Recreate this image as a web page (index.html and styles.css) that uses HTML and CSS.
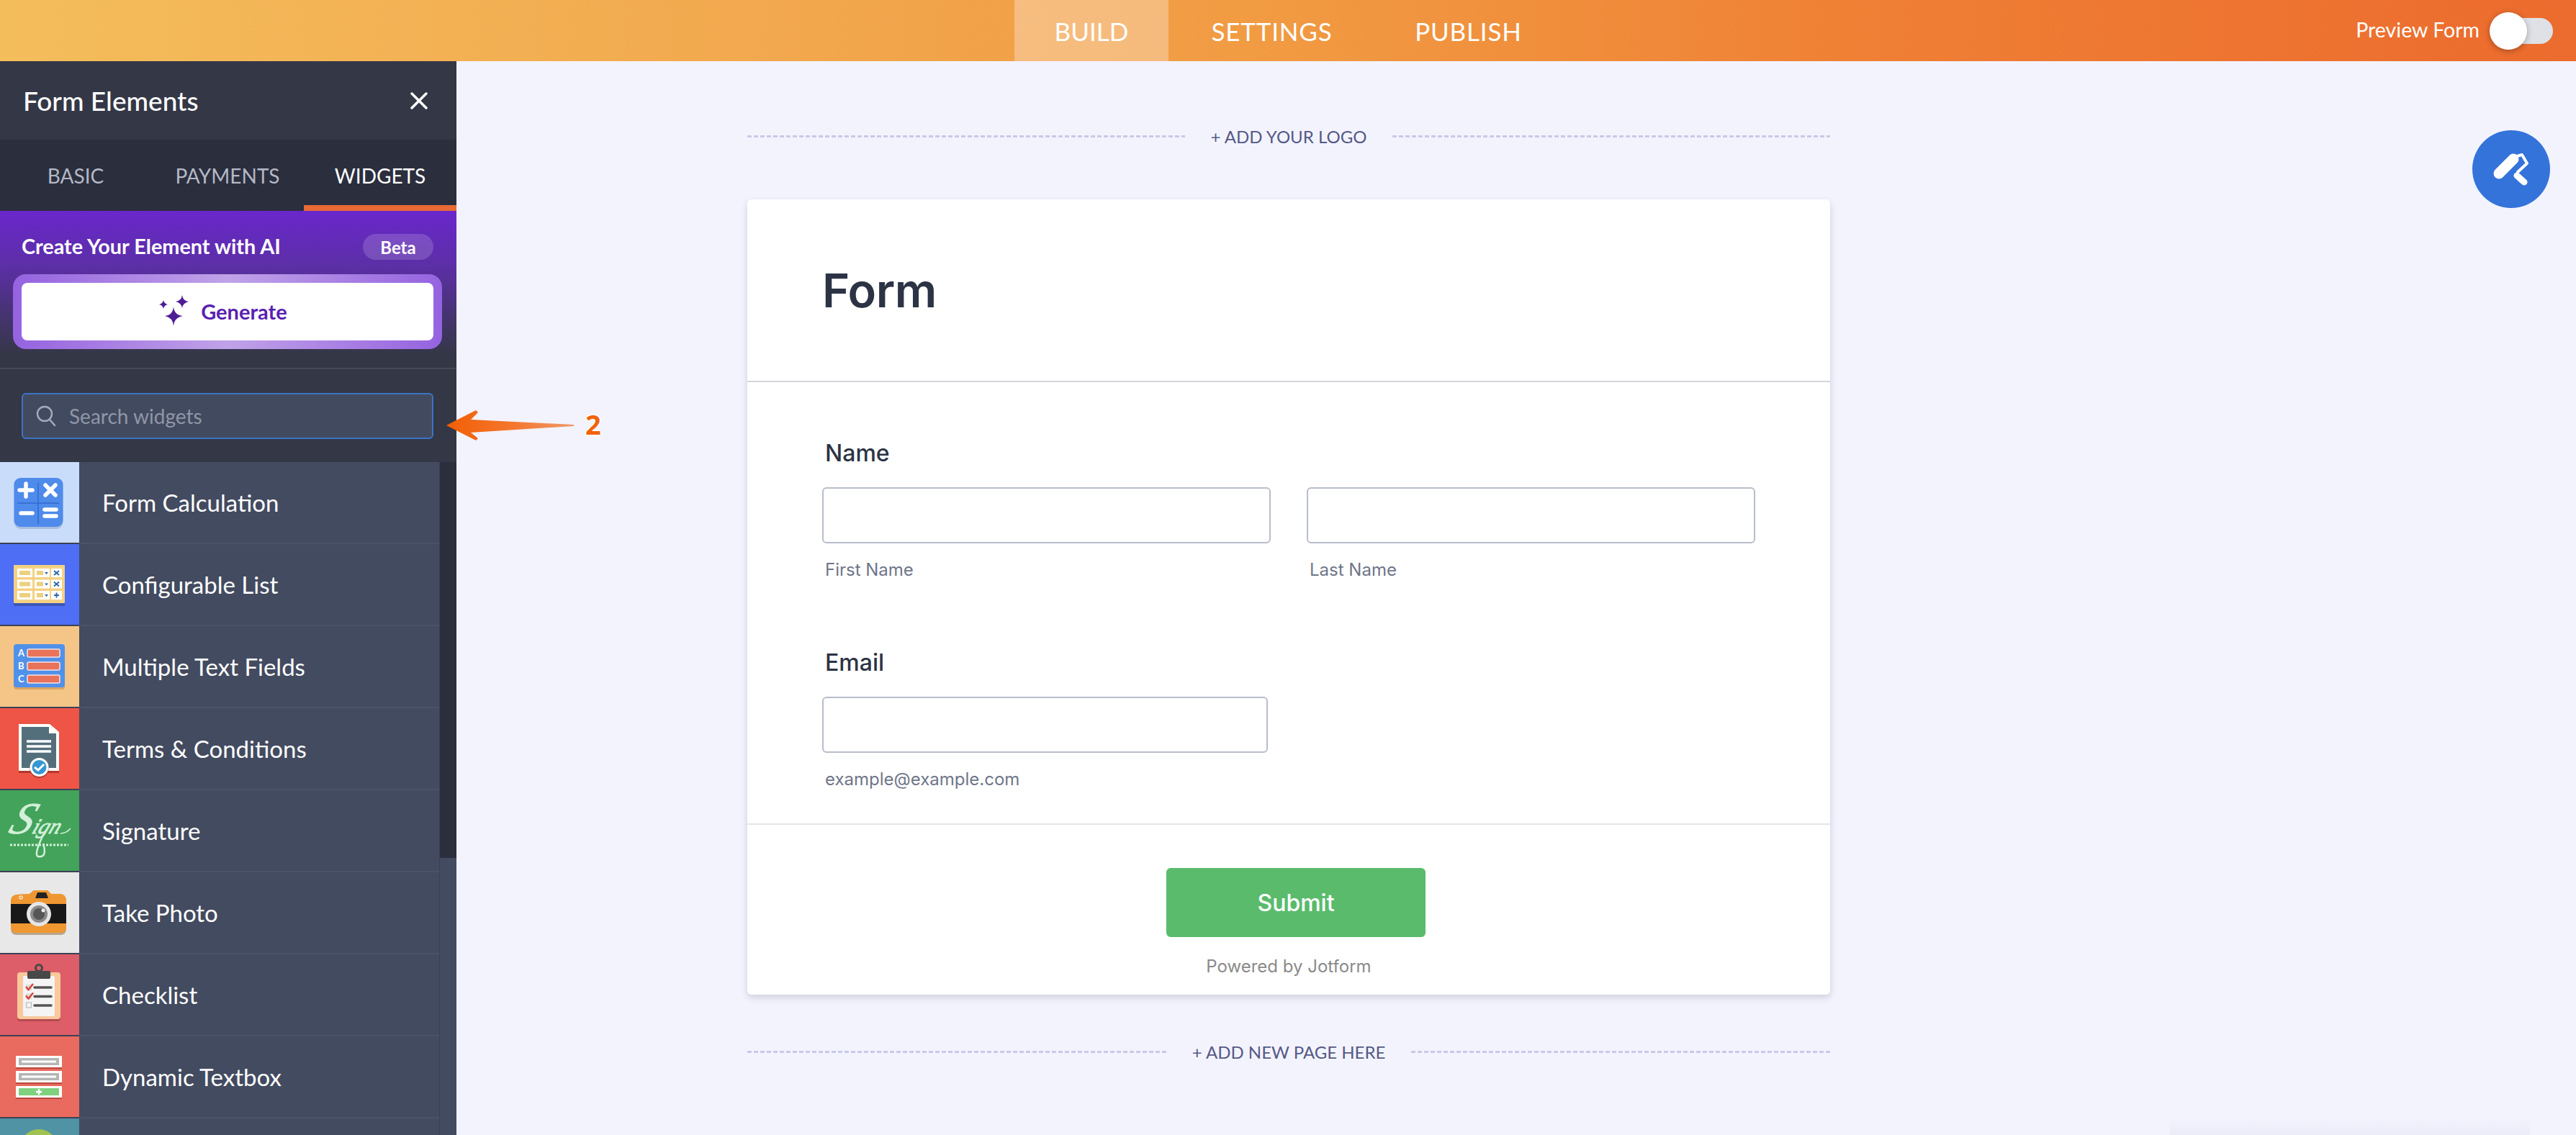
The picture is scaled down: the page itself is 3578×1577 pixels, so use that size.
FILE: index.html
```html
<!DOCTYPE html>
<html lang="en">
<head>
<meta charset="utf-8">
<title>Form Builder</title>
<link rel="stylesheet" href="styles.css">
</head>
<body>
<header class="topbar">
  <div></div>
  <nav class="nav">
    <a class="nav-item active">BUILD</a>
    <a class="nav-item">SETTINGS</a>
    <a class="nav-item">PUBLISH</a>
  </nav>
  <div class="preview">
    <span>Preview Form</span>
    <span class="toggle"><span class="knob"></span></span>
  </div>
</header>
<main class="main">
  <aside class="sidebar">
    <div class="side-head">
      <span>Form Elements</span>
      <svg class="close" width="24" height="24" viewBox="0 0 24 24"><path d="M2 2 22 22M22 2 2 22" stroke="#fff" stroke-width="3.500" stroke-linecap="round"/></svg>
    </div>
    <div class="tabs">
      <div class="tab">BASIC</div>
      <div class="tab">PAYMENTS</div>
      <div class="tab on">WIDGETS</div>
    </div>
    <section class="ai">
      <div class="ai-top"><span>Create Your Element with AI</span><span class="beta">Beta</span></div>
      <div class="gen-wrap">
        <button class="gen">
          <svg width="42" height="44" viewBox="0 0 42 44"><g fill="#4f1d96"><path d="M6 7Q7 12 12 13 7 14 6 19 5 14 0 13 5 12 6 7Z"/><path d="M32 0Q33 8 41 9 33 11 32 18 31 11 23 9 31 8 32 0Z"/><path d="M20 16Q21 28 33 29 21 31 20 43 19 31 8 29 19 28 20 16Z"/></g></svg>
          <span>Generate</span>
        </button>
      </div>
    </section>
    <div class="search-wrap">
      <div class="search">
        <svg width="28" height="30" viewBox="0 0 28 30"><circle cx="12" cy="12" r="10" fill="none" stroke="#a3aaba" stroke-width="2.400"/><path d="M19 20 26 28" stroke="#a3aaba" stroke-width="2.600" stroke-linecap="round"/></svg>
        <span>Search widgets</span>
      </div>
    </div>
    <div class="list-wrap">
      <ul class="list">
        <li class="row"><div class="tile t-calc">
          <svg width="110" height="112" viewBox="0 0 110 112"><rect x="19.500" y="25" width="68" height="68" rx="9" fill="#a8bfe2"/><rect x="19.500" y="22" width="68" height="68" rx="9" fill="#4f8bea"/><path d="M53 29V86M24 57H82" stroke="#2f6cd0" stroke-width="1.500"/><path d="M27 39H45M36 30V48M63 32 77 46M77 32 63 46M29 71H45M62 66H78M62 75H78" stroke="#fff" stroke-width="5.500" stroke-linecap="round"/></svg>
        </div><div class="label">Form Calculation</div></li>
        <li class="row"><div class="tile t-list">
          <svg width="110" height="112" viewBox="0 0 110 112"><rect x="19" y="33" width="71" height="53" rx="1" fill="#3c57b5"/><rect x="19" y="29" width="71" height="53" rx="1" fill="#f4d283"/>
            <g fill="#fff"><rect x="24" y="34" width="21" height="12"/><rect x="48" y="34" width="21" height="12"/><rect x="71" y="34" width="15" height="12"/><rect x="24" y="49.500" width="21" height="12"/><rect x="48" y="49.500" width="21" height="12"/><rect x="71" y="49.500" width="15" height="12"/><rect x="24" y="65" width="21" height="12"/><rect x="48" y="65" width="21" height="12"/><rect x="71" y="65" width="15" height="12"/></g>
            <g fill="#ecd07f"><rect x="27" y="37" width="15" height="6"/><rect x="51" y="37" width="9" height="6"/><rect x="27" y="52.500" width="15" height="6"/><rect x="51" y="52.500" width="9" height="6"/><rect x="27" y="68" width="15" height="6"/><rect x="51" y="68" width="9" height="6"/></g>
            <path d="M62 39h5l-2.500 3zM62 54.500h5l-2.500 3zM62 70h5l-2.500 3z" fill="#2e6aa8"/>
            <path d="M75 37 82 43M82 37 75 43M75 52.500 82 58.500M82 52.500 75 58.500M75 71H82M78.500 67.500V74.500" stroke="#2e6aa8" stroke-width="2"/></svg>
        </div><div class="label">Configurable List</div></li>
        <li class="row"><div class="tile t-abc">
          <svg width="110" height="112" viewBox="0 0 110 112"><rect x="19" y="28" width="71" height="60" rx="4" fill="#d6a466"/><rect x="19" y="25" width="71" height="60" rx="4" fill="#5191ea"/>
            <g fill="#e8725a" stroke="#f3e3e3" stroke-width="1.500"><rect x="38" y="32" width="45" height="11" rx="2"/><rect x="38" y="50" width="45" height="11" rx="2"/><rect x="38" y="68" width="45" height="11" rx="2"/></g>
            <g class="abc"><text x="25" y="42">A</text><text x="25" y="60">B</text><text x="25" y="78">C</text></g></svg>
        </div><div class="label">Multiple Text Fields</div></li>
        <li class="row"><div class="tile t-terms">
          <svg width="110" height="112" viewBox="0 0 110 112"><rect x="26" y="60" width="56" height="30" fill="#b3372e"/><path d="M26 22H69L82 33V87H26Z" fill="#fff"/><path d="M30 26H68V35H78V83H30Z" fill="#546f7c"/><path d="M37 46H71M37 53H71M37 60H71" stroke="#fff" stroke-width="3.500"/><circle cx="54.500" cy="84" r="13" fill="#b3372e"/><circle cx="54.500" cy="82" r="13" fill="#fff"/><circle cx="54.500" cy="82" r="10" fill="#3497d3"/><path d="M48 82 53 86 61 78" fill="none" stroke="#fff" stroke-width="3"/></svg>
        </div><div class="label">Terms &amp; Conditions</div></li>
        <li class="row"><div class="tile t-sign">
          <svg width="110" height="112" viewBox="0 0 110 112"><text class="sign" transform="translate(10 60) skewX(-22)">S<tspan class="sign-low" dx="2">ign</tspan></text><path d="M14 76H95" stroke="#d2f0da" stroke-width="3" stroke-dasharray="3 2"/><path d="M62 58Q46 90 53 92 66 94 60 74" fill="none" stroke="#d2f0da" stroke-width="2.500"/><path d="M84 60Q92 60 98 53" fill="none" stroke="#d2f0da" stroke-width="1.500"/></svg>
        </div><div class="label">Signature</div></li>
        <li class="row"><div class="tile t-cam">
          <svg width="110" height="112" viewBox="0 0 110 112"><path d="M15 40Q15 32 23 31L41 30 47 25H66L71 30H84Q92 31 92 40V78Q92 87 84 87H23Q15 87 15 78Z" fill="#b8a68e"/><path d="M15 40Q15 32 23 31L41 30 47 25H66L71 30H84Q92 31 92 40V76Q92 84 84 84H23Q15 84 15 76Z" fill="#ef9731"/><rect x="15" y="44" width="77" height="27" fill="#181818"/><path d="M49 36 52 28H64L67 36Z" fill="#222"/><circle cx="54" cy="58" r="17" fill="#e6e6e6"/><circle cx="54" cy="58" r="12" fill="#8a8a8a"/><circle cx="54" cy="58" r="8" fill="#565656"/><circle cx="60" cy="53" r="2.500" fill="#eee"/><circle cx="29" cy="35" r="2" fill="none" stroke="#fbe6c8" stroke-width="1.500"/></svg>
        </div><div class="label">Take Photo</div></li>
        <li class="row"><div class="tile t-check">
          <svg width="110" height="112" viewBox="0 0 110 112"><rect x="24" y="28" width="60" height="65" rx="4" fill="#b54a50"/><rect x="24" y="25" width="60" height="65" rx="4" fill="#f9c89b"/><rect x="32" y="30" width="44" height="56" rx="2" fill="#f4f4f4"/><circle cx="54" cy="19" r="4.500" fill="none" stroke="#484848" stroke-width="3"/><rect x="38" y="23" width="32" height="11" rx="2" fill="#484848"/><path d="M48 46H71M48 58.500H71M48 71H71" stroke="#555" stroke-width="3.500" stroke-linecap="round"/><rect x="36" y="42" width="8" height="8" fill="#ddd"/><rect x="36" y="54.500" width="8" height="8" fill="#ddd"/><rect x="36.500" y="67" width="7" height="7" fill="#f4f4f4" stroke="#bbb" stroke-width="1.200"/><path d="M36 45 39.500 49 46 41M36 57.500 39.500 61.500 46 53.500" fill="none" stroke="#d9463c" stroke-width="2.600"/></svg>
        </div><div class="label">Checklist</div></li>
        <li class="row"><div class="tile t-box">
          <svg width="110" height="112" viewBox="0 0 110 112"><g fill="#b8483f"><rect x="22" y="29" width="64" height="16"/><rect x="22" y="50" width="64" height="16"/><rect x="22" y="71" width="64" height="16"/></g><g fill="#fff"><rect x="22" y="27" width="64" height="16"/><rect x="22" y="48" width="64" height="16"/><rect x="22" y="69" width="64" height="16"/></g><g fill="#b5b5b5"><rect x="26" y="30" width="56" height="10"/><rect x="26" y="51" width="56" height="10"/></g><g fill="#fff"><rect x="30" y="33.500" width="48" height="3"/><rect x="30" y="54.500" width="48" height="3"/></g><rect x="26" y="72" width="56" height="10" fill="#7fd17f"/><path d="M50 77H58M54 73V81" stroke="#fff" stroke-width="2.500"/></svg>
        </div><div class="label">Dynamic Textbox</div></li>
        <li class="row"><div class="tile t-last">
          <svg width="110" height="112" viewBox="0 0 110 112"><circle cx="54" cy="42" r="27" fill="#a0c24f"/></svg>
        </div><div class="label"></div></li>
      </ul>
      <div class="scrollbar"><div class="thumb"></div></div>
    </div>
  </aside>
  <div class="canvas">
    <div class="add-row logo-row"><span class="dash"></span><span class="add-text">+ ADD YOUR LOGO</span><span class="dash"></span></div>
    <form class="card">
      <div class="card-head"><h1>Form</h1></div>
      <div class="card-body">
        <div class="field">
          <label class="f-label">Name</label>
          <div class="f-cols">
            <div class="f-col"><div class="input"></div><div class="sub">First Name</div></div>
            <div class="f-col"><div class="input"></div><div class="sub">Last Name</div></div>
          </div>
        </div>
        <div class="field email">
          <label class="f-label">Email</label>
          <div class="f-cols">
            <div class="f-col narrow"><div class="input"></div><div class="sub">example@example.com</div></div>
          </div>
        </div>
      </div>
      <div class="card-foot">
        <div class="submit">Submit</div>
        <div class="powered">Powered by Jotform</div>
      </div>
    </form>
    <div class="add-row page-row"><span class="dash"></span><span class="add-text">+ ADD NEW PAGE HERE</span><span class="dash"></span></div>
    <div class="paint">
      <svg width="108" height="108" viewBox="0 0 108 108"><path d="M37 60 57 40" stroke="#fff" stroke-width="15" stroke-linecap="round"/><path d="M62 36 69 34 76 46 62 59" fill="none" stroke="#fff" stroke-width="4" stroke-linejoin="round"/><path d="M62 63 72 72" stroke="#fff" stroke-width="9" stroke-linecap="round"/></svg>
    </div>
    <div class="fade"></div>
  </div>
  <div class="callout">
    <svg width="178" height="44" viewBox="0 0 178 44"><defs><linearGradient id="arr" x1="0" x2="1" y1="0" y2="0"><stop offset="0" stop-color="#f25f05"/><stop offset=".5" stop-color="#f4752a"/><stop offset="1" stop-color="#f0996c"/></linearGradient></defs><path d="M0 22 41 1 44 4 34 14 177 21V23L34 32 44 40 41 43Z" fill="url(#arr)"/></svg>
    <span class="num">2</span>
  </div>
</main>
</body>
</html>
```
FILE: styles.css
```css
* { box-sizing: border-box; }
html, body { margin: 0; height: 100%; overflow: hidden; }
body { width: 3578px; height: 1577px; font-family: "Lato", "Open Sans", sans-serif; background: #f3f3fe; color: #2c3345; display: flex; flex-direction: column; }

.topbar { flex: 0 0 85px; display: grid; grid-template-columns: 1fr auto 1fr; background: linear-gradient(90deg, #f4bd5c 0%, #f2a84e 30%, #f19a42 50%, #ef7f34 73%, #ec6b2e 100%); color: #fff; }
.nav { display: grid; grid-template-columns: 214px 287px 259px; }
.nav-item { height: 85px; display: flex; align-items: center; justify-content: center; font-size: 35px; letter-spacing: 0.8px; }
.nav-item.active { background: rgba(255,255,255,.3); letter-spacing: 0; }
.preview { display: flex; justify-content: flex-end; align-items: center; padding-right: 32px; font-size: 28.500px; gap: 26px; }
.preview > span:first-child { margin-top: -3px; }
.toggle { position: relative; width: 76px; height: 36px; border-radius: 18px; background: #dfe1e6; }
.knob { position: absolute; left: -12px; top: -8px; width: 52px; height: 52px; border-radius: 50%; background: #fff; box-shadow: 0 2px 8px rgba(0,0,0,.3); }

.main { flex: 1; display: flex; position: relative; min-height: 0; }
.sidebar { flex: 0 0 634px; display: flex; flex-direction: column; background: #343746; color: #fff; overflow: hidden; }
.side-head { flex: 0 0 109px; display: flex; justify-content: space-between; align-items: center; padding: 0 40px 0 32px; font-size: 37px; font-weight: 500; }
.tabs { flex: 0 0 99px; display: grid; grid-template-columns: 210px 212px 212px; background: #2b2e3d; }
.tab { display: flex; align-items: center; justify-content: center; font-size: 28px; color: #b4b8c6; padding-bottom: 4px; padding-top: 4px; }
.tab.on { color: #fff; border-bottom: 8px solid #e96a35; padding-bottom: 0; padding-top: 8px; }
.ai { flex: 0 0 220px; padding: 32px 32px 0 30px; background: linear-gradient(180deg, #6a27cc 0%, #5c2fa6 35%, #343746 92%); border-bottom: 2px solid #454858; }
.ai-top { display: flex; justify-content: space-between; align-items: center; height: 36px; font-size: 28.800px; font-weight: 700; }
.ai-top > span:first-child { margin-top: -2px; }
.beta { width: 98px; height: 36px; border-radius: 18px; background: rgba(255,255,255,.16); display: flex; align-items: center; justify-content: center; font-size: 24px; }
.gen-wrap { margin: 20px -12px 0; height: 104px; padding: 12px; border-radius: 18px; background: linear-gradient(90deg, #9563e0 0%, #c0a2e8 50%, #9563e0 100%); }
.gen { width: 100%; height: 80px; border: 0; border-radius: 8px; background: #fff; display: flex; align-items: center; justify-content: center; gap: 16px; padding: 0 12px 2px 0; color: #5b1fb0; font: 700 29px "Lato", sans-serif; }
.search-wrap { flex: 0 0 129px; padding: 33px 32px 0 30px; }
.search { height: 64px; border: 2px solid #3b74c4; border-radius: 6px; background: #424a5f; display: flex; align-items: center; padding-left: 18px; gap: 18px; font-size: 28px; color: #8f97a8; }

.list-wrap { flex: 1; display: flex; min-height: 0; overflow: hidden; }
.list { flex: 0 0 610px; list-style: none; margin: 0; padding: 0; }
.row { display: flex; height: 114px; }
.tile { flex: 0 0 110px; height: 114px; border-bottom: 2px solid #3d4156; overflow: hidden; }
.tile svg { display: block; }
.t-calc { background: #c9dcfa; }
.t-list { background: #4d6ef5; }
.t-abc { background: #f5c588; }
.t-terms { background: #ee5546; }
.t-sign { background: #43a35a; }
.t-cam { background: #e8e8e8; }
.t-check { background: #dd5e69; }
.t-box { background: #e96a5e; }
.t-last { background: #4f93a5; }
.label { flex: 1; height: 114px; background: #434b60; border-bottom: 2px solid #4b5369; display: flex; align-items: center; padding-left: 32px; font-size: 33px; }
.abc text { font: 700 13px "Lato", sans-serif; fill: #fff; }
.sign { font: italic 400 62px "Liberation Serif", serif; fill: #d2f0da; stroke: #d2f0da; stroke-width: 0.8px; }
.sign-low { font-size: 30px; }
.scrollbar { flex: 0 0 24px; background: #434b60; border-left: 1px solid #3a4054; }
.thumb { height: 550px; background: #2b2e3d; }

.canvas { flex: 1; min-width: 0; padding-left: 404px; position: relative; }
.add-row { width: 1504px; height: 40px; display: flex; align-items: center; gap: 36px; color: #555a86; }
.logo-row { margin-top: 84px; margin-bottom: 68px; }
.page-row { margin-top: 59px; }
.dash { flex: 1; height: 3px; background: repeating-linear-gradient(90deg, #c8cae6 0 6px, transparent 6px 9px); }
.add-text { font: 400 24px "Lato", sans-serif; white-space: nowrap; }
.card { display: block; width: 1504px; height: 1105px; background: #fff; border-radius: 6px; box-shadow: 0 4px 10px rgba(60,60,90,.2); font-family: "Inter", sans-serif; }
.card-head { height: 254px; border-bottom: 2px solid #d5d6dc; display: flex; align-items: center; padding-left: 104px; }
h1 { margin: 0; font-size: 65px; font-weight: 600; line-height: 1; letter-spacing: -0.5px; }
.card-body { padding: 77px 0 47px 104px; border-bottom: 2px solid #e3e5ea; }
.field.email { margin-top: 93px; }
.f-label { display: block; height: 40px; line-height: 44px; padding-left: 4px; font-size: 32px; font-weight: 450; }
.f-cols { display: flex; gap: 50px; margin-top: 29px; }
.f-col { width: 623px; }
.f-col.narrow { width: 619px; }
.input { height: 78px; border: 2px solid #b8bdc9; border-radius: 6px; background: #fff; }
.sub { height: 30px; line-height: 32px; margin-top: 21px; padding-left: 4px; font-size: 24px; color: #6f7689; }
.card-foot { padding-top: 60px; display: flex; flex-direction: column; align-items: center; }
.submit { width: 360px; height: 96px; margin-left: 20px; background: #5abb6c; border-radius: 6px; color: #fff; display: flex; align-items: center; justify-content: center; font-size: 32px; font-weight: 500; }
.powered { margin-top: 24px; height: 30px; line-height: 33px; font-size: 24px; color: #8a8a8a; }

.paint { position: absolute; left: 2800px; top: 96px; width: 108px; height: 108px; border-radius: 50%; background: #3473da; }
.paint svg { display: block; }
.fade { position: absolute; left: 2380px; bottom: 0; width: 500px; height: 24px; background: linear-gradient(180deg, transparent, rgba(120,120,160,.06)); }
.callout { position: absolute; left: 620px; top: 482px; display: flex; align-items: center; }
.callout svg { display: block; }
.num { margin-left: 15px; margin-top: -4px; font: 700 38px "Open Sans", sans-serif; color: #f2620c; text-shadow: -2px 0 #fff, 2px 0 #fff, 0 -2px #fff, 0 2px #fff; }
```
